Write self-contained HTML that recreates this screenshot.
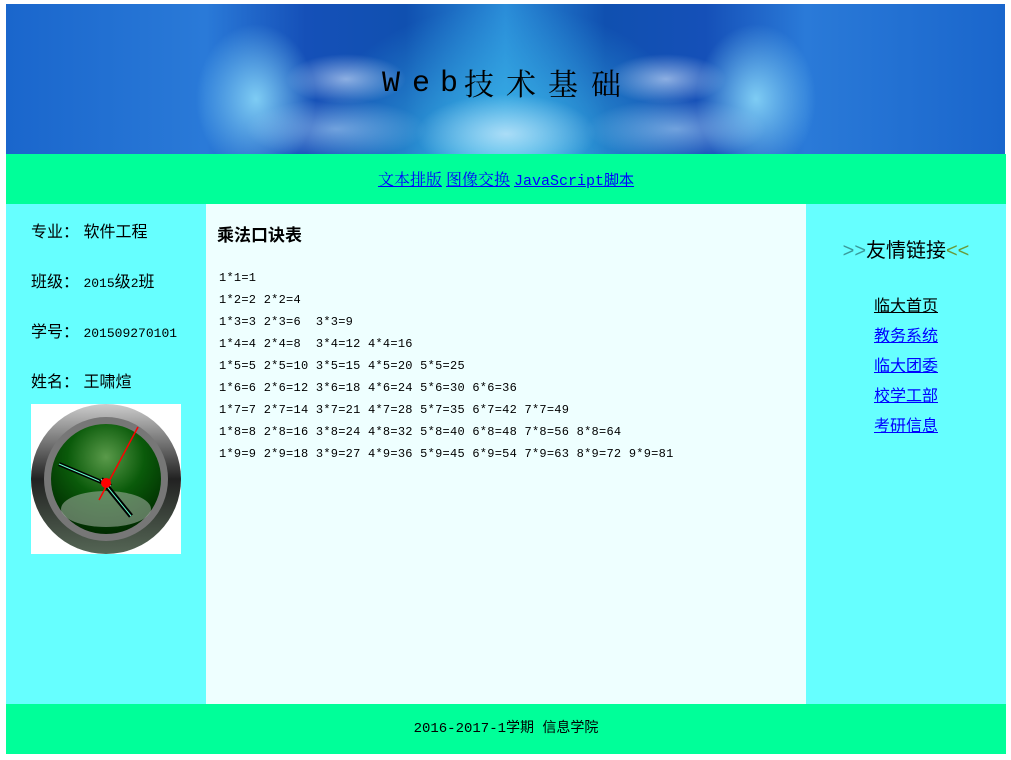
<!DOCTYPE html>
<html><head><meta charset="utf-8"><style>
body{margin:0;width:1011px;height:760px;background:#fff;position:relative;font-family:"Liberation Serif","Noto Serif CJK SC","Noto Sans CJK SC",serif;overflow:hidden}
#hd{position:absolute;left:6px;top:4px;width:999px;height:150px;overflow:hidden;
background:
radial-gradient(ellipse 90px 40px at 500px 130px,rgba(220,240,255,.7),transparent),
radial-gradient(ellipse 60px 25px at 340px 75px,rgba(220,235,255,.6),transparent),
radial-gradient(ellipse 60px 25px at 660px 75px,rgba(220,235,255,.6),transparent),
radial-gradient(ellipse 90px 30px at 330px 125px,rgba(200,230,255,.5),transparent),
radial-gradient(ellipse 90px 30px at 670px 125px,rgba(200,230,255,.5),transparent),
radial-gradient(ellipse 60px 75px at 250px 95px,rgba(150,230,255,.8),transparent),
radial-gradient(ellipse 60px 75px at 750px 95px,rgba(150,230,255,.8),transparent),
radial-gradient(ellipse 200px 160px at 500px 160px,#3ab8e8,transparent),
linear-gradient(90deg,#1a66cc 0%,#2a7ad8 20%,#1550b8 30%,#1050b0 40%,#2a8cd8 50%,#1050b0 60%,#1550b8 70%,#2a7ad8 80%,#1a66cc 100%);}
#hd span{position:absolute;font-size:29px;color:#000;line-height:1}
#hd .e{top:65px;font-family:"Liberation Mono",monospace;font-size:30px}
#hd .z{top:63px;font-family:"Noto Serif CJK SC",serif;font-size:30px}
#nav{position:absolute;left:6px;top:158px;width:1000px;height:46px;text-align:center;line-height:46px;font-size:16px}
#navbg{position:absolute;left:6px;top:154px;width:1000px;height:50px;background:#00ff99}
a{color:#00f}
#l{position:absolute;left:6px;top:204px;width:200px;height:500px;background:#66ffff}
#l p{position:absolute;left:25px;margin:0;font-size:16px;font-family:"Liberation Sans","Noto Sans CJK SC",sans-serif}
#l p b{font-weight:normal;font-family:"Liberation Mono",monospace;font-size:13px}
#c{position:absolute;left:206px;top:204px;width:600px;height:500px;background:#eeffff}
#c h3{position:absolute;left:11px;top:17px;margin:0;font-size:17px;font-family:"Liberation Sans","Noto Sans CJK SC",sans-serif}
#c pre{position:absolute;left:13px;top:63px;margin:0;font-family:"Liberation Mono",monospace;font-size:12px;letter-spacing:.25px;line-height:22px}
#r{position:absolute;left:806px;top:204px;width:200px;height:500px;background:#66ffff;text-align:center;font-family:"Liberation Sans","Noto Sans CJK SC",sans-serif}
#r .t{position:absolute;top:30px;width:200px;font-size:20px}
#r .lk{position:absolute;top:88px;width:200px;font-size:16px;line-height:30px}
#ft{position:absolute;left:6px;top:704px;width:1000px;height:50px;background:#00ff99;text-align:center;line-height:50px;font-size:14px;font-family:"Liberation Mono","Noto Sans CJK SC",monospace}
</style></head><body>
<div id="hd"><span class="e" style="left:376px">W</span><span class="e" style="left:406px">e</span><span class="e" style="left:434px">b</span><span class="z" style="left:458px">技</span><span class="z" style="left:500px">术</span><span class="z" style="left:542px">基</span><span class="z" style="left:585px">础</span></div>
<div id="navbg"></div>
<div id="nav"><a href="#">文本排版</a> <a href="#">图像交换</a> <a href="#" style="font-family:'Liberation Mono','Noto Sans CJK SC',monospace;font-size:15px">JavaScript脚本</a></div>
<div id="l">
<p style="top:14px">专业： 软件工程</p>
<p style="top:64px">班级： <b>2015</b>级<b>2</b>班</p>
<p style="top:114px">学号： <b>201509270101</b></p>
<p style="top:164px">姓名： 王啸煊</p>
<svg style="position:absolute;left:25px;top:200px" width="150" height="150" viewBox="0 0 150 150">
<rect width="150" height="150" fill="#fff"/>
<defs><linearGradient id="g1" x1="0" y1="0" x2="0" y2="1"><stop offset="0" stop-color="#ccc"/><stop offset=".5" stop-color="#222"/><stop offset="1" stop-color="#556655"/></linearGradient>
<radialGradient id="g2" cx=".5" cy=".3" r=".7"><stop offset="0" stop-color="#5a9a4a"/><stop offset=".5" stop-color="#0a5a0a"/><stop offset="1" stop-color="#002a00"/></radialGradient></defs>
<circle cx="75" cy="75" r="75" fill="url(#g1)"/>
<circle cx="75" cy="75" r="62" fill="#777"/>
<circle cx="75" cy="75" r="55" fill="url(#g2)"/>
<ellipse cx="75" cy="105" rx="45" ry="18" fill="#9a9" opacity=".6"/>
<line x1="28" y1="60" x2="80" y2="82" stroke="#000" stroke-width="4"/><line x1="28" y1="60" x2="80" y2="82" stroke="#6fc" stroke-width="1"/>
<line x1="70" y1="75" x2="100" y2="112" stroke="#000" stroke-width="5"/><line x1="70" y1="75" x2="100" y2="112" stroke="#6fc" stroke-width="1"/>
<line x1="68" y1="96" x2="107" y2="23" stroke="#f00" stroke-width="1.5"/>
<circle cx="75" cy="79" r="5" fill="#f00"/>
</svg>
</div>
<div id="c"><h3>乘法口诀表</h3><pre>1*1=1
1*2=2 2*2=4
1*3=3 2*3=6  3*3=9
1*4=4 2*4=8  3*4=12 4*4=16
1*5=5 2*5=10 3*5=15 4*5=20 5*5=25
1*6=6 2*6=12 3*6=18 4*6=24 5*6=30 6*6=36
1*7=7 2*7=14 3*7=21 4*7=28 5*7=35 6*7=42 7*7=49
1*8=8 2*8=16 3*8=24 4*8=32 5*8=40 6*8=48 7*8=56 8*8=64
1*9=9 2*9=18 3*9=27 4*9=36 5*9=45 6*9=54 7*9=63 8*9=72 9*9=81</pre></div>
<div id="r"><div class="t"><span style="color:#3a9a9a">&gt;&gt;</span>友情链接<span style="color:#6a9a3a">&lt;&lt;</span></div>
<div class="lk"><a href="#" style="color:#000">临大首页</a><br><a href="#">教务系统</a><br><a href="#">临大团委</a><br><a href="#">校学工部</a><br><a href="#">考研信息</a></div></div>
<div id="ft">2016-2017-1学期 信息学院</div>
</body></html>
